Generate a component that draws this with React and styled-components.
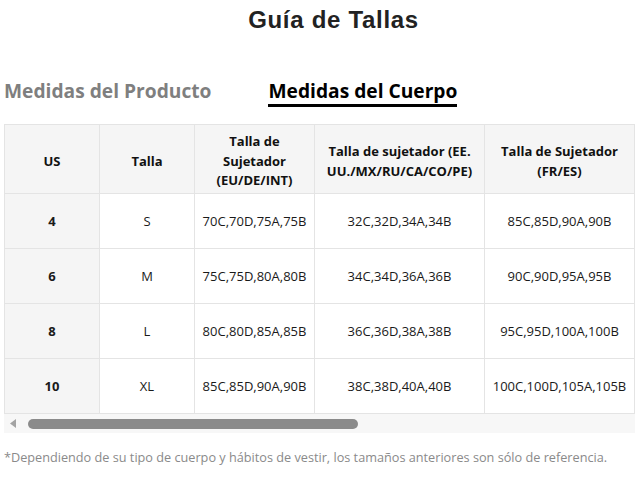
import React from "react";
import styled, { createGlobalStyle } from "styled-components";

const GlobalStyle = createGlobalStyle`
  html, body { margin: 0; padding: 0; background: #fff; }
  body { font-family: "Open Sans", "Noto Sans", sans-serif; color: #111; overflow: hidden; }
`;

const Page = styled.div`
  width: 631px;
  padding-left: 4px;
`;

const Title = styled.h1`
  margin: 0;
  padding: 7px 0 0 28px;
  text-align: center;
  font-family: "Liberation Sans", Arial, sans-serif;
  font-weight: 700;
  font-size: 24px;
  line-height: 26px;
  letter-spacing: 0.7px;
  color: #222;
`;

const Tabs = styled.div`
  display: flex;
  gap: 57px;
  margin-top: 45px;
  height: 39px;
  align-items: flex-start;
`;

const Tab = styled.div`
  font-size: 19.2px;
  font-weight: 700;
  line-height: 26px;
  color: ${(p) => (p.$active ? "#000" : "#7f7f7f")};
  border-bottom: 3px solid ${(p) => (p.$active ? "#000" : "transparent")};
`;

const TableWrap = styled.div`
  margin-top: 7px;
  overflow: hidden;
  width: 631px;
`;

const Table = styled.table`
  border-collapse: collapse;
  table-layout: fixed;
  width: 630px;
`;

const Th = styled.th`
  background: #f5f5f5;
  border: 1px solid #e4e4e4;
  height: 69px;
  box-sizing: border-box;
  padding: 5px 8px 0;
  font-size: 13px;
  line-height: 19.5px;
  font-weight: 700;
  color: #111;
  text-align: center;
  vertical-align: middle;
`;

const Td = styled.td`
  background: ${(p) => (p.$head ? "#f5f5f5" : "#fff")};
  border: 1px solid #e4e4e4;
  height: 54px;
  padding: 0 4px;
  font-size: 13px;
  font-weight: ${(p) => (p.$head ? 700 : 400)};
  color: #1a1a1a;
  text-align: center;
  vertical-align: middle;
  white-space: nowrap;
`;

const ScrollTrack = styled.div`
  height: 19px;
  background: #f7f7f7;
  display: flex;
  align-items: center;
  gap: 12px;
  padding-left: 6px;
`;

const Thumb = styled.div`
  width: 330px;
  height: 10px;
  border-radius: 5px;
  background: #8b8b8b;
`;

const Note = styled.p`
  margin: 15px 0 0;
  font-size: 12.7px;
  color: #8a8a8a;
  white-space: nowrap;
`;

const cols = [95, 95, 120, 170, 150];

const rows = [
  ["4", "S", "70C,70D,75A,75B", "32C,32D,34A,34B", "85C,85D,90A,90B"],
  ["6", "M", "75C,75D,80A,80B", "34C,34D,36A,36B", "90C,90D,95A,95B"],
  ["8", "L", "80C,80D,85A,85B", "36C,36D,38A,38B", "95C,95D,100A,100B"],
  ["10", "XL", "85C,85D,90A,90B", "38C,38D,40A,40B", "100C,100D,105A,105B"],
];

export default function App() {
  return (
    <>
      <GlobalStyle />
      <Page>
        <Title>Guía de Tallas</Title>
        <Tabs>
          <Tab>Medidas del Producto</Tab>
          <Tab $active>Medidas del Cuerpo</Tab>
        </Tabs>
        <TableWrap>
          <Table>
            <colgroup>
              {cols.map((w, i) => (
                <col key={i} style={{ width: w }} />
              ))}
            </colgroup>
            <thead>
              <tr>
                <Th>US</Th>
                <Th>Talla</Th>
                <Th>
                  Talla de
                  <br />
                  Sujetador
                  <br />
                  (EU/DE/INT)
                </Th>
                <Th>
                  Talla de sujetador (EE.
                  <br />
                  UU./MX/RU/CA/CO/PE)
                </Th>
                <Th>
                  Talla de Sujetador
                  <br />
                  (FR/ES)
                </Th>
              </tr>
            </thead>
            <tbody>
              {rows.map((r) => (
                <tr key={r[0]}>
                  {r.map((c, i) => (
                    <Td key={i} $head={i === 0}>
                      {c}
                    </Td>
                  ))}
                </tr>
              ))}
            </tbody>
          </Table>
        </TableWrap>
        <ScrollTrack>
          <svg width="6" height="9" viewBox="0 0 6 9">
            <path d="M6 0 L0 4.5 L6 9 Z" fill="#a3a3a3" />
          </svg>
          <Thumb />
        </ScrollTrack>
        <Note>
          *Dependiendo de su tipo de cuerpo y hábitos de vestir, los tamaños anteriores son sólo de referencia.
        </Note>
      </Page>
    </>
  );
}
